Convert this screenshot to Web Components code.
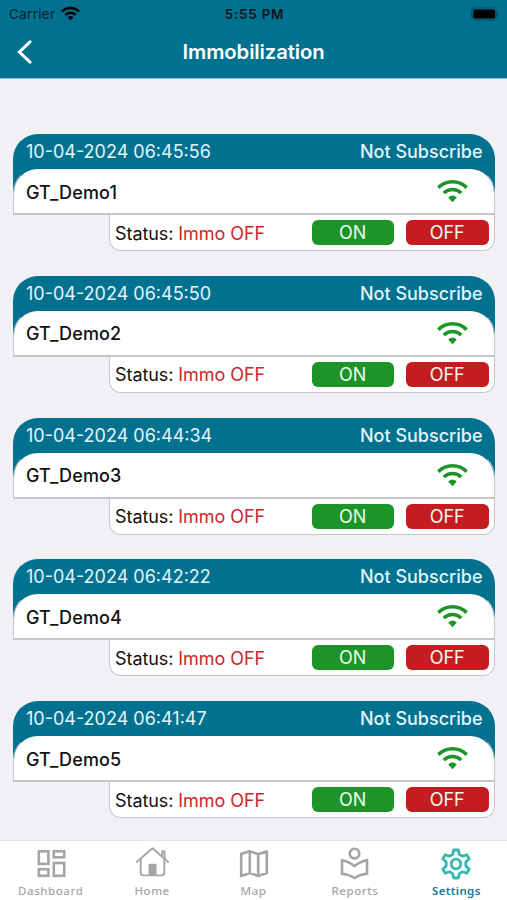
<!DOCTYPE html>
<html lang="en">
<head>
<meta charset="utf-8">
<title>Immobilization</title>
<style>
html, body {
  margin: 0;
  height: 100%;
}
body {
  background: #f0f0f5;
  font-family: Inter, "Liberation Sans", sans-serif;
  overflow: hidden;
}
</style>
</head>
<body>
<immo-app></immo-app>

<script>
const WIFI = `
  <path d="M1.3 8.6 C9.5 .9 21.5 .9 29.7 8.6" fill="none" stroke="currentColor" stroke-width="3.5"/>
  <path d="M6.8 14 C11.8 9.3 19.2 9.3 24.2 14" fill="none" stroke="currentColor" stroke-width="3.5"/>
  <path d="M11.2 18.6 Q15.5 14.6 19.8 18.6 L15.5 23.2 Z" fill="currentColor"/>`;

class StatusBar extends HTMLElement {
  constructor() {
    super();
    this._root = this.attachShadow({mode: 'open'});
  }

  connectedCallback() {
    this._root.innerHTML =
`
<style>
:host {
  display: grid;
  grid-template-columns: 1fr auto 1fr;
  align-items: center;
  height: 28px;
  padding: 0 7px 0 9px;
  color: #06222c;
  font-size: 13.5px;
  line-height: 28px;
}
.carrier {
  display: flex;
  align-items: center;
  gap: 6px;
  letter-spacing: .3px;
}
.wifi {
  width: 19px;
  height: 15px;
  color: #000;
  margin-top: -1px;
}
.time {
  font-weight: 600;
  font-size: 13.5px;
  letter-spacing: .75px;
  color: #06141a;
}
.battery {
  justify-self: end;
  width: 29px;
  height: 14px;
  margin-top: -1px;
}
</style>
<div class="carrier"><slot name="carrier"></slot>
  <svg class="wifi" viewBox="0 0 31 24">
    <path d="M1.6 9 C9.5 1 21.5 1 29.4 9" fill="none" stroke="currentColor" stroke-width="4.3"/>
    <path d="M7 14.3 C11.8 9.6 19.2 9.6 24 14.3" fill="none" stroke="currentColor" stroke-width="4"/>
    <path d="M10.8 18.4 Q15.5 14 20.2 18.4 L15.5 23.2 Z" fill="currentColor"/>
  </svg>
</div>
<span class="time"><slot name="time"></slot></span>
<svg class="battery" viewBox="0 0 29 14">
  <rect x=".8" y="1" width="24.6" height="12" rx="3.6" fill="none" stroke="#044a5e" stroke-width="1.1"/>
  <rect x="2.2" y="2.6" width="22" height="8.8" rx="2" fill="#000"/>
  <path d="M26.8 5 Q28.6 7 26.8 9 Z" fill="#044a5e"/>
</svg>
`;
  }
}

class NavBar extends HTMLElement {
  constructor() {
    super();
    this._root = this.attachShadow({mode: 'open'});
  }

  connectedCallback() {
    this._root.innerHTML =
`
<style>
:host {
  display: grid;
  grid-template-columns: 50px 1fr 50px;
  align-items: center;
  height: 48px;
  color: #fff;
}
.back {
  width: 16px;
  height: 24px;
  margin-left: 17px;
}
.title {
  margin: 0;
  text-align: center;
  font-size: 20.3px;
  font-weight: 600;
  line-height: 48px;
  letter-spacing: -.1px;
}
</style>
<svg class="back" viewBox="0 0 16 24">
  <path d="M13 1.8 2.4 12 13 22.2" fill="none" stroke="#fff" stroke-width="3" stroke-linecap="round"/>
</svg>
<h1 class="title"><slot></slot></h1>
`;
  }
}

class VehicleCard extends HTMLElement {
  constructor() {
    super();
    this._root = this.attachShadow({mode: 'open'});
  }

  connectedCallback() {
    this._root.innerHTML =
`
<style>
:host {
  --teal: #00718f;
  --line: #c5c6ca;
  display: block;
  height: 117px;
  font-size: 18px;
}
.card {
  background: linear-gradient(var(--teal) 60px, transparent 60px);
  border-radius: 25px 25px 0 0;
}
.top {
  display: flex;
  justify-content: space-between;
  height: 34px;
  padding: 0 12.5px 0 13px;
  line-height: 35px;
  color: #e2f5fa;
}
.plan { font-weight: 500; }
.body {
  display: flex;
  align-items: center;
  justify-content: space-between;
  box-sizing: border-box;
  height: 47px;
  padding: 0 26px 0 12px;
  background: #fff;
  border: 1px solid var(--line);
  border-top-color: transparent;
  border-bottom-width: 2px;
  background-clip: padding-box;
  border-radius: 25px 25px 0 0;
  color: #111;
}
.name {
  margin-top: 2px;
  font-weight: 500;
  letter-spacing: .15px;
}
.wifi {
  width: 31px;
  height: 24px;
  color: #1c9427;
}
.status {
  display: flex;
  align-items: center;
  box-sizing: border-box;
  height: 36px;
  margin-left: 96px;
  padding: 0 5.5px 0 5px;
  background: #fff;
  border: 1px solid var(--line);
  border-top: 0;
  border-radius: 0 0 12px 12px;
  color: #111;
}
.state {
  flex: 1;
  padding-top: 1px;
  letter-spacing: -.07px;
  white-space: pre;
}
.state b {
  font-weight: 400;
  color: #c9272c;
}
button {
  width: 82.5px;
  height: 25px;
  margin: 0 0 0 12px;
  padding: 1px 0 0;
  border: 0;
  border-radius: 6px;
  font: inherit;
  line-height: 24px;
  color: #eefaf0;
}
.on { background: #1c9427; }
.off { background: #c41c1f; }
</style>
<div class="card">
  <div class="top">
    <span class="date"><slot name="date"></slot></span>
    <span class="plan"><slot name="plan"></slot></span>
  </div>
  <div class="body">
    <span class="name"><slot name="name"></slot></span>
    <svg class="wifi" viewBox="0 0 31 24">${WIFI}</svg>
  </div>
</div>
<div class="status">
  <span class="state">Status: <b><slot name="state"></slot></b></span>
  <button class="on">ON</button>
  <button class="off">OFF</button>
</div>
`;
  }
}

const TAB_ICONS = {
  dashboard: `<g fill="none" stroke="currentColor" stroke-width="2.6">
    <rect x="4.8" y="4.3" width="9.6" height="12.6"/><rect x="19.8" y="4.3" width="10.4" height="6"/>
    <rect x="4.8" y="22.2" width="9.6" height="6.6"/><rect x="19.8" y="16" width="10.4" height="12.8"/></g>`,
  home: `<g fill="none" stroke="currentColor" stroke-width="1.9" stroke-linecap="round" stroke-linejoin="round">
    <path d="M1.6 15 17.5 1.3 33.1 15"/><path d="M5.7 12.5V25.8Q5.7 28.4 8.3 28.4H26.7Q29.3 28.4 29.3 25.8V12.5"/>
    <path d="M27.2 8.8V4.3H29.6V11"/></g><path d="M13.5 28.4V16.8H21.5V28.4Z" fill="currentColor"/>`,
  map: `<path d="M4.2 6.8 12.8 4.3 21.2 7.2 29.8 4.3V26L21.2 29 12.8 26 4.2 29ZM12.8 4.3V26M21.2 7.2V29" fill="none" stroke="currentColor" stroke-width="2.6" stroke-linejoin="round"/>`,
  reports: `<g fill="none" stroke="currentColor" stroke-width="2.6">
    <circle cx="16.5" cy="6.6" r="4.8"/>
    <path d="M16.5 19Q11 14.4 4 13.2V26.8Q11 27.4 16.5 31Q22 27.4 29 26.8V13.2Q22 14.4 16.5 19Z"/></g>`,
  settings: `<g fill="none" stroke="currentColor" stroke-width="2.8" stroke-linejoin="round">
    <circle cx="17" cy="17" r="4.8"/>
    <path d="M14.6 3H19.4L20.2 7.4 23.6 9.3 27.8 7.7 30.2 11.9 26.8 14.8V19.2L30.2 22.1 27.8 26.3 23.6 24.7 20.2 26.6 19.4 31H14.6L13.8 26.6 10.4 24.7 6.2 26.3 3.8 22.1 7.2 19.2V14.8L3.8 11.9 6.2 7.7 10.4 9.3 13.8 7.4Z"/></g>`
};

class TabItem extends HTMLElement {
  constructor() {
    super();
    this._root = this.attachShadow({mode: 'open'});
  }

  connectedCallback() {
    this._root.innerHTML =
`
<style>
:host {
  display: flex;
  flex-direction: column;
  align-items: center;
  flex: 1 1 0;
  color: #a5a5a5;
  font: 500 11.5px/14px "Noto Sans", "Open Sans", sans-serif;
  letter-spacing: .55px;
}
:host([active]) { color: #11799a; font-weight: 600; letter-spacing: .35px; }
:host([active]) svg { color: #35b8ae; }
svg {
  width: 34px;
  height: 34px;
  margin: 6px 0 3px;
}
</style>
<svg viewBox="0 0 34 34">${TAB_ICONS[this.getAttribute('icon')]}</svg>
<slot></slot>
`;
  }
}

class ImmoApp extends HTMLElement {
  constructor() {
    super();
    this._root = this.attachShadow({mode: 'open'});
    this._vehicles = [
      ['GT_Demo1', '10-04-2024 06:45:56'],
      ['GT_Demo2', '10-04-2024 06:45:50'],
      ['GT_Demo3', '10-04-2024 06:44:34'],
      ['GT_Demo4', '10-04-2024 06:42:22'],
      ['GT_Demo5', '10-04-2024 06:41:47']
    ];
  }

  renderCards() {
    return this._vehicles.map(([name, date]) => `
  <vehicle-card>
    <span slot="date">${date}</span>
    <span slot="plan">Not Subscribe</span>
    <span slot="name">${name}</span>
    <span slot="state">Immo OFF</span>
  </vehicle-card>`).join('');
  }

  connectedCallback() {
    this._root.innerHTML =
`
<style>
:host {
  display: flex;
  flex-direction: column;
  height: 900px;
}
header {
  background: #00718f;
  border-bottom: 1px solid #8fc0d0;
  height: 78px;
}
main {
  display: flex;
  flex-direction: column;
  flex: 1;
  gap: 24.75px;
  padding: 55px 12px 0 13px;
  min-height: 0;
  overflow: hidden;
}
footer {
  display: flex;
  height: 59px;
  background: #fff;
  border-top: 1px solid #e3e3e7;
}
</style>
<header>
  <status-bar><span slot="carrier">Carrier</span><span slot="time">5:55 PM</span></status-bar>
  <nav-bar>Immobilization</nav-bar>
</header>
<main>${this.renderCards()}</main>
<footer>
  <tab-item icon="dashboard">Dashboard</tab-item>
  <tab-item icon="home">Home</tab-item>
  <tab-item icon="map">Map</tab-item>
  <tab-item icon="reports">Reports</tab-item>
  <tab-item icon="settings" active>Settings</tab-item>
</footer>
`;
  }
}

window.customElements.define('status-bar', StatusBar);
window.customElements.define('nav-bar', NavBar);
window.customElements.define('vehicle-card', VehicleCard);
window.customElements.define('tab-item', TabItem);
window.customElements.define('immo-app', ImmoApp);
</script>
</body>
</html>
